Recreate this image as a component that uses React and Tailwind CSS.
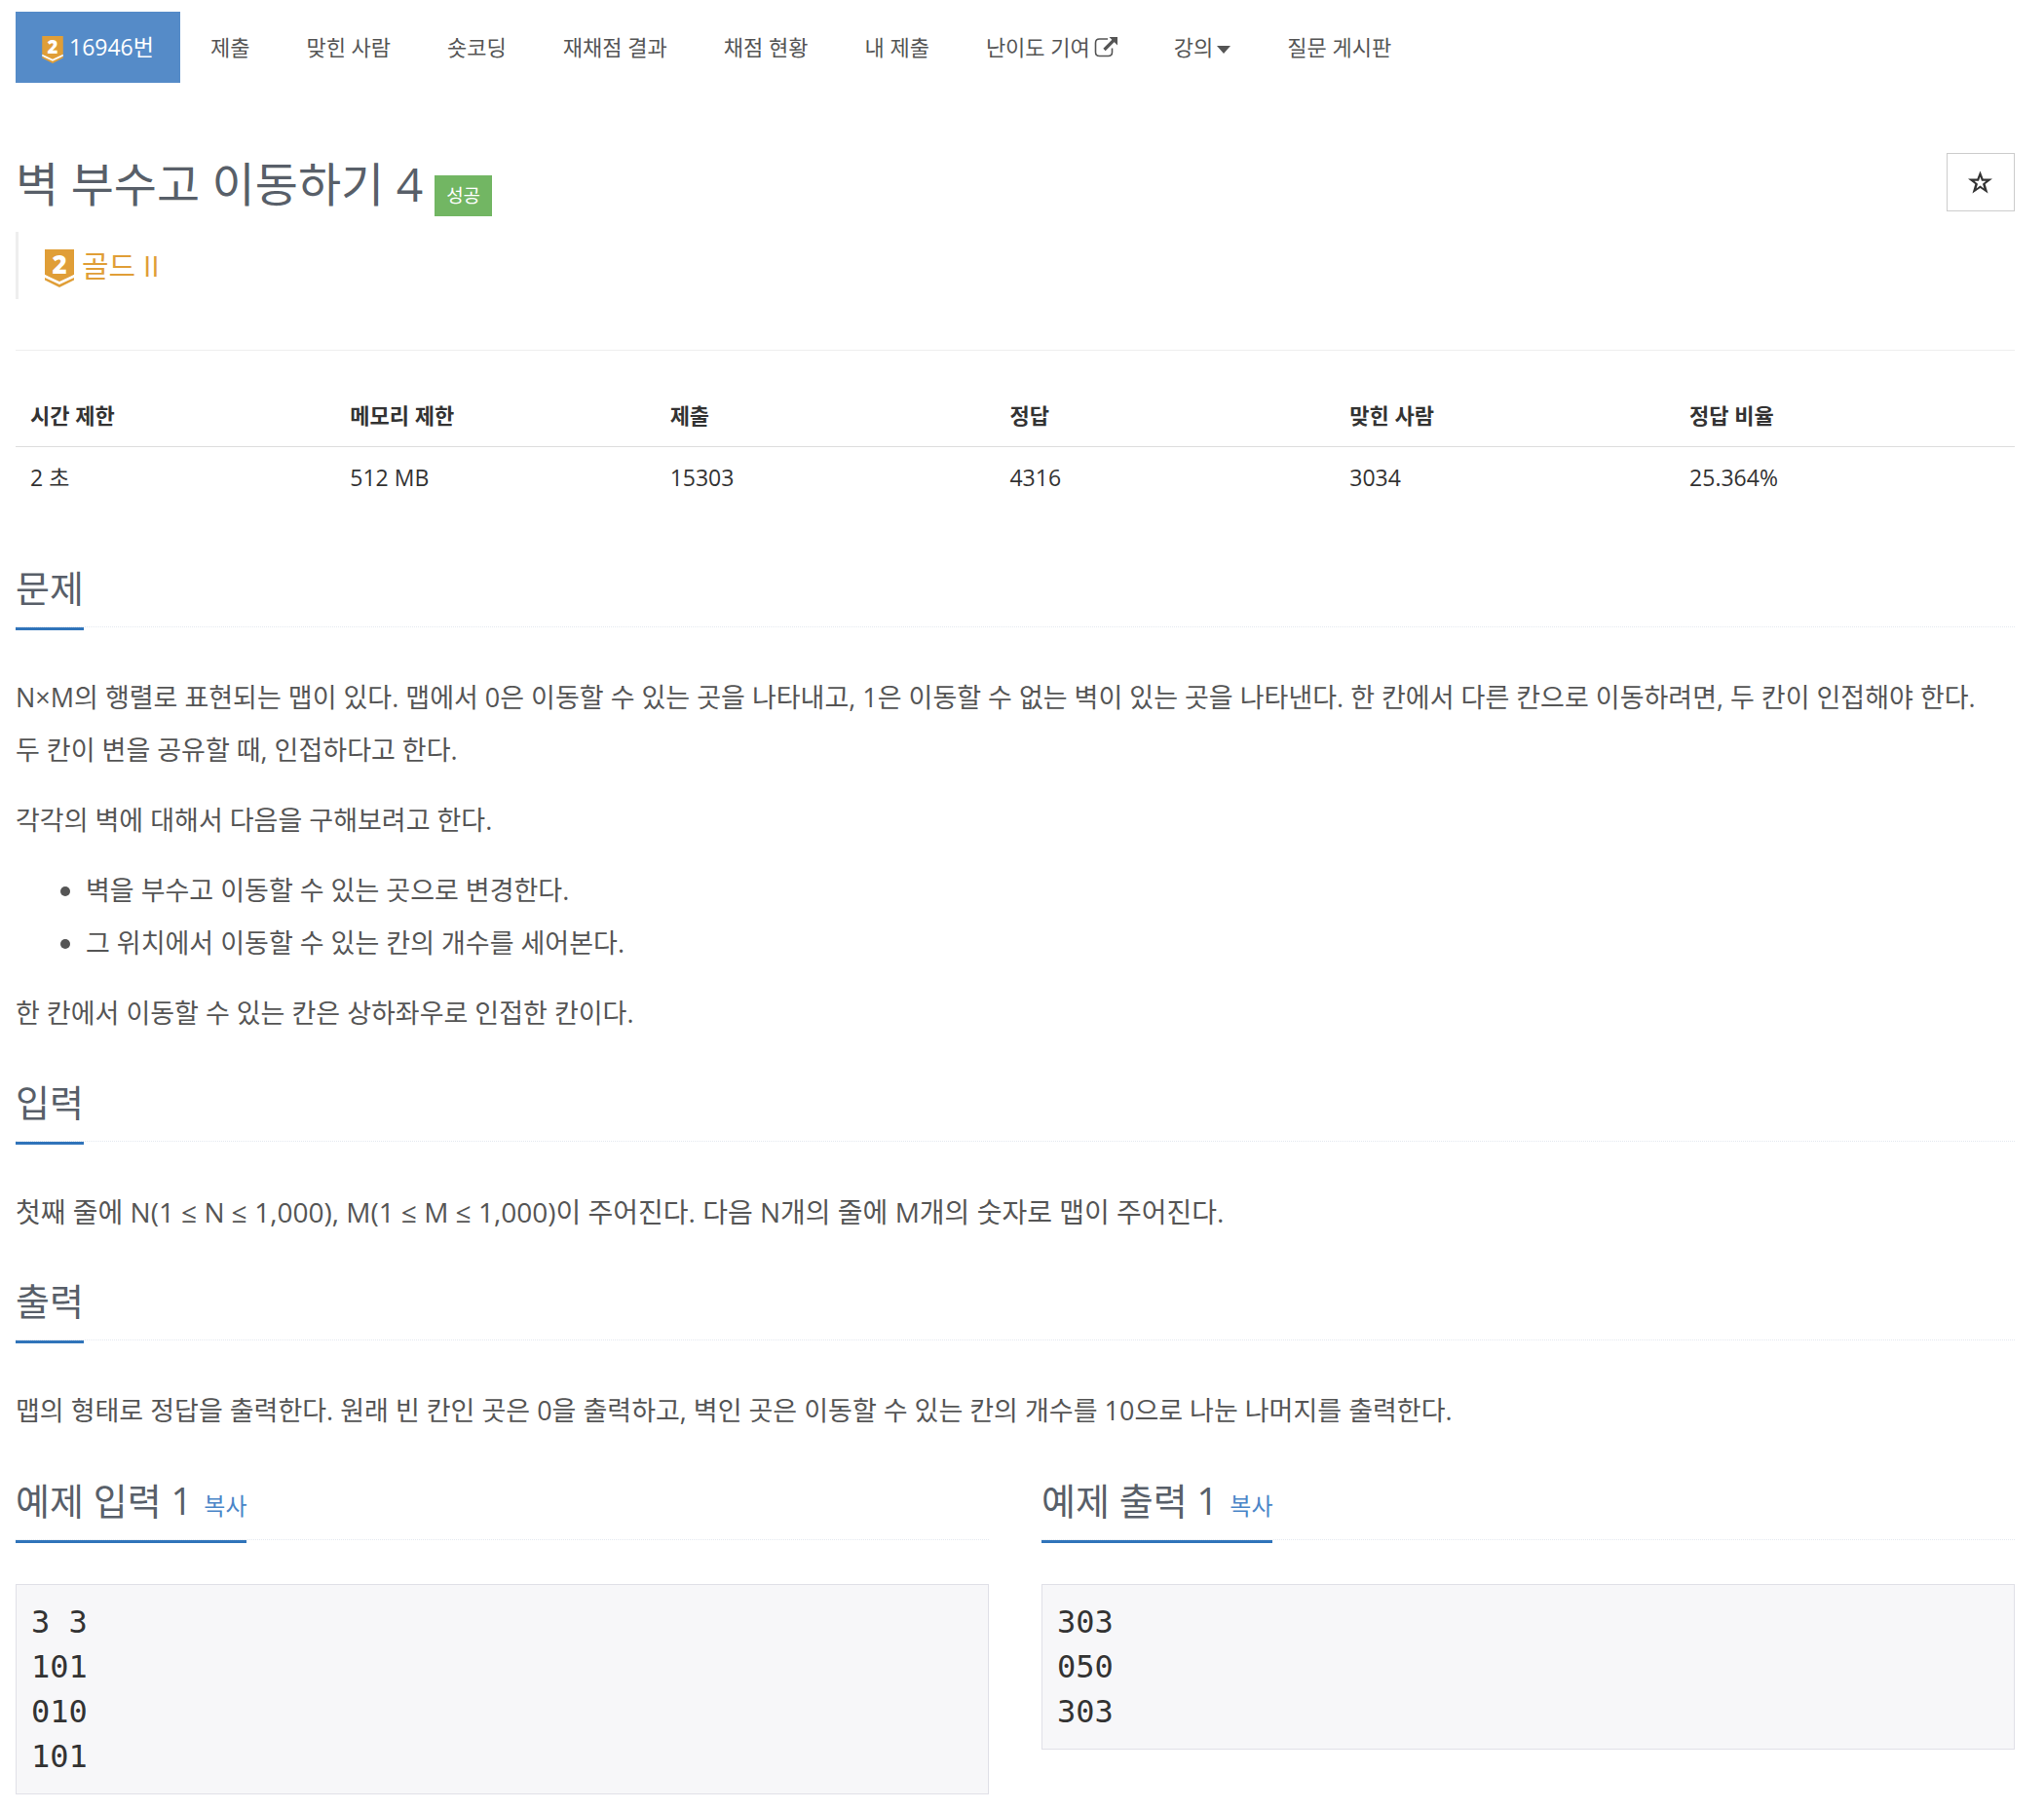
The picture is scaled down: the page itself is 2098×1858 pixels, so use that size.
import React from "react";

const FONT = "font-['Open_Sans','Noto_Sans_CJK_KR',sans-serif]";

function TierBadge({ className, fill, gap }) {
  return (
    <svg viewBox="0 0 30 39" className={`overflow-visible ${className}`} role="img" aria-label="골드 II">
      <path d="M0 0H30V26L15 35L0 26Z" fill={fill} />
      <path d="M0 26L15 33L30 26V29L15 38L0 29Z" fill={gap} />
      <path d="M0 29L15 36L30 29V31.500L15 39L0 31.500Z" fill={fill} />
      <text x="15" y="24.500" textAnchor="middle" fontSize="26" fontWeight="800" fill="#fff">
        2
      </text>
    </svg>
  );
}

function ExternalIcon() {
  return (
    <svg viewBox="0 0 24 28" className="ml-1 h-7 w-6" fill="none" aria-hidden="true">
      <path d="M14 5H5.500Q1.500 5 1.500 9V18.500Q1.500 22.500 5.500 22.500H14.500Q18.500 22.500 18.500 18.500V14.500" stroke="currentColor" strokeWidth="1.600" />
      <path d="M10.500 16L20 6.500" stroke="currentColor" strokeWidth="3.200" />
      <path d="M15.500 3H24V11.500Z" fill="currentColor" />
    </svg>
  );
}

const navItems = [
  { label: "제출" },
  { label: "맞힌 사람" },
  { label: "숏코딩" },
  { label: "재채점 결과" },
  { label: "채점 현황" },
  { label: "내 제출" },
  { label: "난이도 기여", icon: <ExternalIcon /> },
  {
    label: "강의",
    icon: (
      <svg viewBox="0 0 14 8" className="mt-1 ml-1 h-2 w-3.5" aria-hidden="true">
        <path d="M0 0H14L7 8Z" fill="currentColor" />
      </svg>
    ),
  },
  { label: "질문 게시판" },
];

const stats = [
  { name: "시간 제한", value: "2 초", width: "w-[16%]" },
  { name: "메모리 제한", value: "512 MB", width: "w-[16%]" },
  { name: "제출", value: "15303", width: "w-[17%]" },
  { name: "정답", value: "4316", width: "w-[17%]" },
  { name: "맞힌 사람", value: "3034", width: "w-[17%]" },
  { name: "정답 비율", value: "25.364%", width: "w-[17%]" },
];

function Heading({ children, copy }) {
  return (
    <div className="flex border-b border-dotted border-[#e4e9f0]">
      <h2 className="-mb-1 border-b-[3px] border-[#3074ba] pb-4 text-[38px] leading-[49px] text-[#585f69]">
        {children}
        {copy && (
          <button type="button" className="ml-3 text-[24px] leading-none text-[#4a86c8]">
            복사
          </button>
        )}
      </h2>
    </div>
  );
}

function Section({ title, children }) {
  return (
    <section className="mt-10">
      <Heading>{title}</Heading>
      <div className="mt-[45px] space-y-[18px] text-[27px] leading-[54px] text-[#555]">{children}</div>
    </section>
  );
}

function Sample({ title, data }) {
  return (
    <section className="flex-1">
      <Heading copy>{title}</Heading>
      <pre className="mt-[45px] border border-[#e0e0e7] bg-[#f7f7f9] p-[15px] font-['DejaVu_Sans_Mono',monospace] text-[32px] leading-[46px] text-[#333]">
        {data}
      </pre>
    </section>
  );
}

export default function App() {
  return (
    <main lang="ko" className={`min-h-screen bg-white px-4 pt-3 pr-[30px] pb-4 text-[#333] ${FONT}`}>
      <nav className="flex gap-1 text-[22px] leading-[73px] text-[#555]">
        <a href="#problem" className="flex items-center bg-[#558bc8] px-[27px] text-[23px] text-white">
          <TierBadge className="mt-1 mr-1.5 h-7 w-[22px]" fill="#e09e37" gap="#fff" />
          16946번
        </a>
        {navItems.map((item) => (
          <a key={item.label} href="#menu" className="flex items-center px-[27px]">
            {item.label}
            {item.icon}
          </a>
        ))}
      </nav>

      <header id="problem" className="mt-[72px]">
        <div className="flex items-start justify-between">
          <div className="flex items-start">
            <h1 className="text-[48px] leading-[64px] text-[#585f69]">벽 부수고 이동하기 4</h1>
            <span className="mt-[23px] ml-3 bg-[#72b663] px-3 text-[19px] leading-[42px] text-white">성공</span>
          </div>
          <button
            type="button"
            aria-label="즐겨찾기"
            className="flex h-[60px] w-[70px] items-center justify-center border border-[#ccc]"
          >
            <svg viewBox="0 0 26 25" className="h-[25px] w-[26px]" aria-hidden="true">
              <path
                d="M12.500 0.500L15.600 8.500H25L17.700 14L20.500 23.500L12.500 18L4.500 23.500L7.300 14L0 8.500H9.400ZM12.500 6.500L11 10.800H6.500L10 13.800L8.600 18.600L12.500 15.600L16.400 18.600L15 13.800L18.500 10.800H14Z"
                fill="#333"
                fillRule="evenodd"
              />
            </svg>
          </button>
        </div>
        <blockquote className="mt-4 flex h-[69px] items-center border-l-3 border-[#eee] pl-[27px] text-[30px] leading-[69px] text-[#e09e37]">
          <TierBadge className="mt-1.5 mr-2 h-[39px] w-[30px]" fill="#e09e37" gap="#fff" />
          골드 II
        </blockquote>
      </header>

      <hr className="mt-[52px] border-[#eee]" />

      <table className="mt-[35px] w-full table-fixed text-left leading-[31px]">
        <thead className="text-[22px]">
          <tr className="border-b border-[#ddd]">
            {stats.map((s) => (
              <th key={s.name} scope="col" className={`${s.width} px-[15px] py-4 font-bold`}>
                {s.name}
              </th>
            ))}
          </tr>
        </thead>
        <tbody className="text-[23px]">
          <tr>
            {stats.map((s) => (
              <td key={s.name} className="px-[15px] py-4">
                {s.value}
              </td>
            ))}
          </tr>
        </tbody>
      </table>

      <div className="pt-[17px]">
        <Section title="문제">
          <p>
            N×M의 행렬로 표현되는 맵이 있다. 맵에서 0은 이동할 수 있는 곳을 나타내고, 1은 이동할 수 없는 벽이 있는 곳을
            나타낸다. 한 칸에서 다른 칸으로 이동하려면, 두 칸이 인접해야 한다.
            <br />두 칸이 변을 공유할 때, 인접하다고 한다.
          </p>
          <p>각각의 벽에 대해서 다음을 구해보려고 한다.</p>
          <ul className="list-disc pl-[72px]">
            <li>벽을 부수고 이동할 수 있는 곳으로 변경한다.</li>
            <li>그 위치에서 이동할 수 있는 칸의 개수를 세어본다.</li>
          </ul>
          <p>한 칸에서 이동할 수 있는 칸은 상하좌우로 인접한 칸이다.</p>
        </Section>
        <Section title="입력">
          <p className="text-[28px]">
            첫째 줄에 N(1 ≤ N ≤ 1,000), M(1 ≤ M ≤ 1,000)이 주어진다. 다음 N개의 줄에 M개의 숫자로 맵이 주어진다.
          </p>
        </Section>
        <Section title="출력">
          <p>맵의 형태로 정답을 출력한다. 원래 빈 칸인 곳은 0을 출력하고, 벽인 곳은 이동할 수 있는 칸의 개수를 10으로 나눈 나머지를 출력한다.</p>
        </Section>
      </div>

      <div className="mt-[41px] flex items-start gap-[54px]">
        <Sample title="예제 입력 1" data={"3 3\n101\n010\n101"} />
        <Sample title="예제 출력 1" data={"303\n050\n303"} />
      </div>
    </main>
  );
}
